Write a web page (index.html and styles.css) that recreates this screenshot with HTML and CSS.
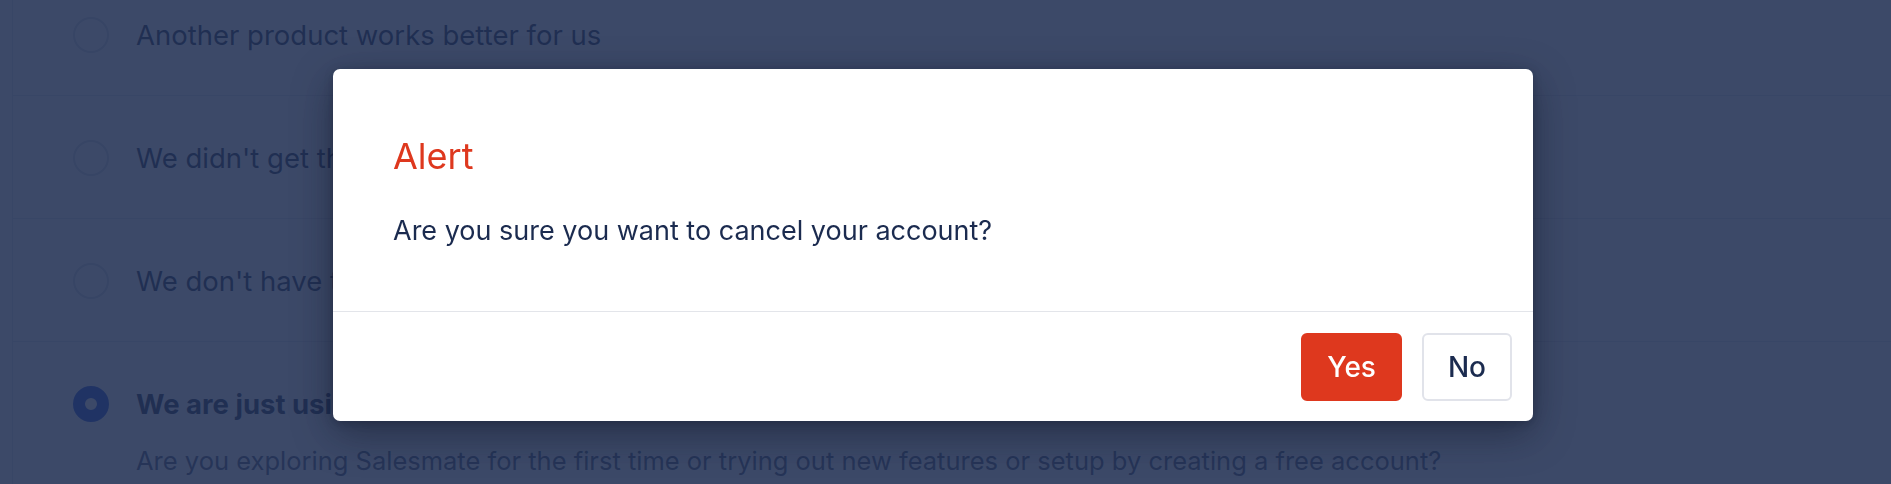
FILE: index.html
```html
<!DOCTYPE html>
<html lang="en">
<head>
<meta charset="utf-8">
<title>Cancel account</title>
<link rel="stylesheet" href="styles.css">
</head>
<body>
<main class="page">
  <section class="reasons">
    <div class="reason">
      <span class="radio"></span>
      <div class="reason-body"><div class="reason-title">Another product works better for us</div></div>
    </div>
    <div class="reason">
      <span class="radio"></span>
      <div class="reason-body"><div class="reason-title">We didn't get the value we expected from Salesmate</div></div>
    </div>
    <div class="reason">
      <span class="radio"></span>
      <div class="reason-body"><div class="reason-title">We don't have the budget for Salesmate right now</div></div>
    </div>
    <div class="reason reason-selected">
      <span class="radio radio-on"></span>
      <div class="reason-body">
        <div class="reason-title">We are just using a free trial account</div>
        <div class="reason-desc">Are you exploring Salesmate for the first time or trying out new features or setup by creating a free account?</div>
      </div>
    </div>
  </section>
</main>

<div class="backdrop"></div>

<div class="modal" role="dialog" aria-labelledby="alert-title">
  <div class="modal-body">
    <h2 class="modal-title" id="alert-title">Alert</h2>
    <p class="modal-text">Are you sure you want to cancel your account?</p>
  </div>
  <div class="modal-footer">
    <button class="btn btn-yes">Yes</button>
    <button class="btn btn-no">No</button>
  </div>
</div>
</body>
</html>
```

FILE: styles.css
```css
* { box-sizing: border-box; }

html, body {
  margin: 0;
  padding: 0;
  background: #ffffff;
  font-family: Inter, "Noto Sans", "Liberation Sans", sans-serif;
  color: #1b2b4f;
  overflow: hidden;
  height: 100%;
}

.page {
  padding-left: 12px;
}

.reasons {
  margin-top: -27px;
  border-left: 1.5px solid #dfe3ea;
}

.reason {
  display: flex;
  align-items: flex-start;
  gap: 27px;
  padding: 44px 0 42px 60px;
  border-bottom: 1.5px solid #dfe3ea;
}

.radio {
  flex: none;
  width: 36px;
  height: 36px;
  border-radius: 50%;
  border: 2px solid #d3d8e0;
  background: #ffffff;
}

.radio-on {
  border: 12.5px solid #1d4ed8;
  background: #ffffff;
}

.reason-body {
  display: flex;
  flex-direction: column;
  gap: 21px;
}

.reason-title {
  font-size: 27.5px;
  line-height: 36px;
  color: #1b2b4f;
}

.reason-selected .reason-title {
  font-weight: 700;
}

.reason-desc {
  font-size: 25.5px;
  line-height: 36px;
  color: #4a5677;
}

.backdrop {
  position: fixed;
  inset: 0;
  background: rgba(33, 48, 83, 0.88);
}

.modal {
  position: fixed;
  top: 69px;
  left: 333px;
  width: 1200px;
  background: #ffffff;
  border-radius: 7px;
  box-shadow: 0 12px 40px rgba(10, 16, 32, 0.45), 0 2px 8px rgba(10, 16, 32, 0.25);
  overflow: hidden;
}

.modal-body {
  padding: 65px 60px 62px;
}

.modal-title {
  margin: 0;
  font-size: 36px;
  line-height: 44px;
  font-weight: 400;
  color: #de381e;
}

.modal-text {
  margin: 35px 0 0;
  font-size: 27px;
  line-height: 36px;
  color: #1b2b4f;
}

.modal-footer {
  display: flex;
  justify-content: flex-end;
  gap: 20px;
  padding: 21px 21px 20px;
  border-top: 1.5px solid #e3e5ea;
}

.btn {
  height: 68px;
  padding: 0 24px;
  border-radius: 6px;
  font-family: inherit;
  font-size: 28px;
  font-weight: 500;
  cursor: pointer;
}

.btn-yes {
  background: #de381e;
  border: 2px solid #de381e;
  color: #ffffff;
}

.btn-no {
  background: #ffffff;
  border: 2px solid #e1e3ea;
  color: #1b2b4f;
}
```
